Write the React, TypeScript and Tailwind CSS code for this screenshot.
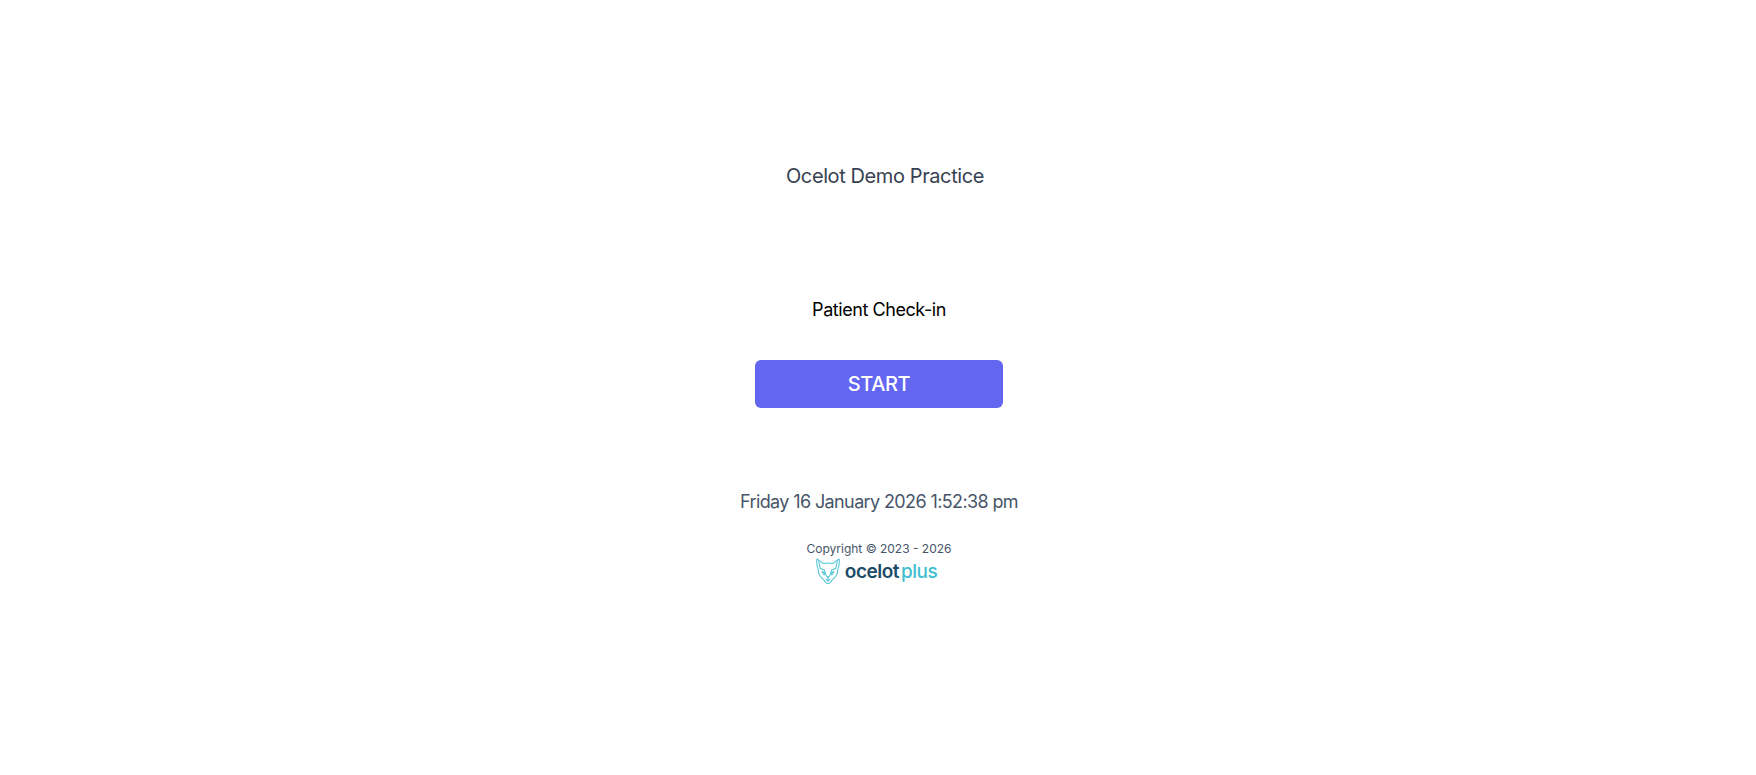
const font = "font-['Inter','Liberation_Sans',sans-serif]";

function OcelotMark() {
  return (
    <svg width="24" height="26" viewBox="0 0 26 28" fill="none" stroke="#4cc3d6" strokeWidth="1.1" strokeLinejoin="round" strokeLinecap="round">
      {/* outer head */}
      <path d="M1 1 L8 6 C11 5.2 15 5.2 18 6 L25 1 C25.6 5 25 9 23.6 12 C23.8 16 22 20 18 23 L15.5 26.6 C14 27.6 12 27.6 10.5 26.6 L8 23 C4 20 2.2 16 2.4 12 C1 9 .4 5 1 1 Z" />
      {/* inner brow line */}
      <path d="M3 4 L4.5 11 L9 13 L11 19 L13 21 L15 19 L17 13 L21.5 11 L23 4" />
      {/* eyes */}
      <path d="M6.5 14.5 L10 16.5 L9 18 C7.8 17.5 7 16 6.5 14.5 Z" />
      <path d="M19.5 14.5 L16 16.5 L17 18 C18.2 17.5 19 16 19.5 14.5 Z" />
      {/* muzzle */}
      <path d="M11 23 L13 25 L15 23 M13 21 L13 25" />
    </svg>
  );
}

export default function App() {
  return (
    <main className={`min-h-screen bg-white ${font}`}>
      <div className="flex flex-col items-center pt-[162px] pl-[2px]">
        <h1 className="pl-3 text-xl leading-7 tracking-[-0.4px] text-[#374151]">Ocelot Demo Practice</h1>
        <p className="mt-[106px] text-lg leading-7 tracking-[-0.44px] text-black">Patient Check-in</p>
        <button className="mt-[36px] h-12 w-[248px] rounded-md bg-[#6366f1] text-xl font-[550] tracking-[-0.4px] text-white">START</button>
        <p className="mt-[80px] text-lg leading-7 tracking-[-0.62px] text-[#475569]">Friday 16 January 2026 1:52:38 pm</p>
        <p className="mt-[25px] text-xs leading-4 text-[#475569]">Copyright © 2023 - 2026</p>
        <div className="flex h-7 items-center gap-[5px] pr-[5px]">
          <OcelotMark />
          <span className="pt-[2px] text-[19px] leading-7 font-semibold tracking-[-0.5px] text-[#1b4d66]">
            ocelot<span className="ml-[2px] font-medium text-[#3fbfd0]">plus</span>
          </span>
        </div>
      </div>
    </main>
  );
}
